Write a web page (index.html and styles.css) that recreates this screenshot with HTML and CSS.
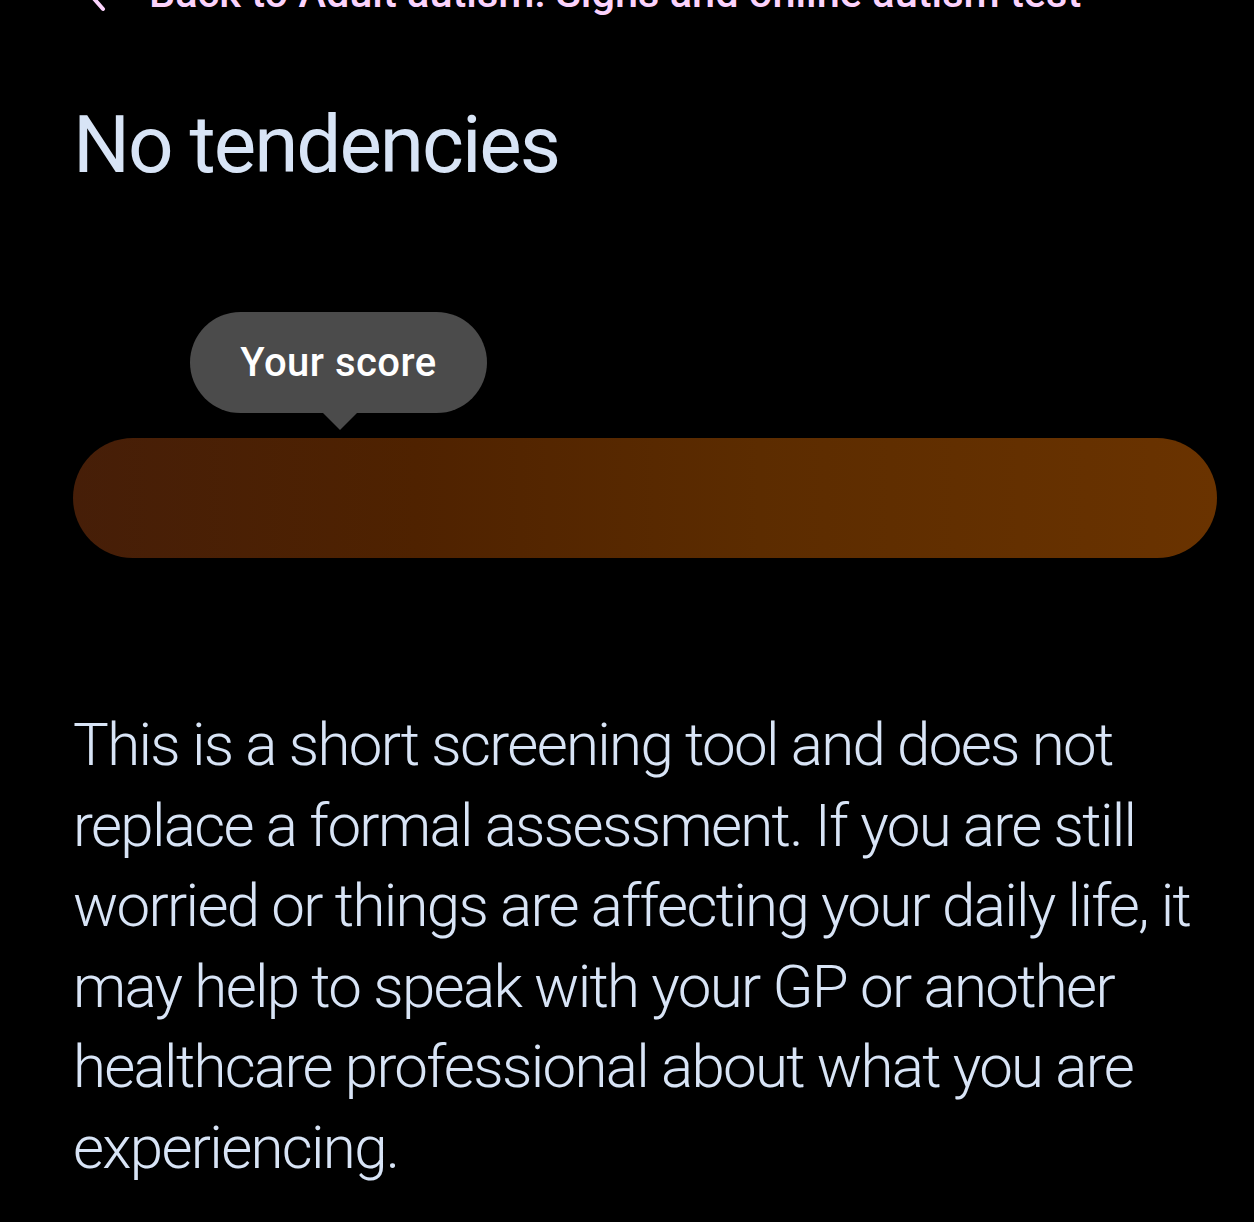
FILE: index.html
```html
<!DOCTYPE html>
<html lang="en">
<head>
<meta charset="utf-8">
<title>No tendencies</title>
<link rel="stylesheet" href="styles.css">
</head>
<body>
<main class="page">
  <a class="back-link" href="#">
    <svg class="back-icon" viewBox="0 0 24 40" width="24" height="40" aria-hidden="true"><path d="M20 4 L6 20 L20 36" fill="none" stroke="currentColor" stroke-width="4" stroke-linecap="round" stroke-linejoin="round"/></svg>
    <span>Back to Adult autism: Signs and online autism test</span>
  </a>
  <h1 class="result-title">No tendencies</h1>
  <section class="score">
    <div class="score-tip">Your score</div>
    <div class="score-bar"></div>
  </section>
  <p class="note">This is a short screening tool and does not replace a formal assessment. If you are still worried or things are affecting your daily life, it may help to speak with your GP or another healthcare professional about what you are experiencing.</p>
</main>
</body>
</html>
```
FILE: styles.css
```css
html, body {
  margin: 0;
  padding: 0;
  background: #000;
}
body {
  font-family: Roboto, "Noto Sans", sans-serif;
  color: #d8e4f6;
  overflow: hidden;
}
.page {
  padding: 0 37px 0 73px;
}
.back-link {
  display: flex;
  align-items: center;
  gap: 42px;
  margin-top: -27px;
  height: 40px;
  color: #fbd3fc;
  text-decoration: none;
  font-size: 41.5px;
  font-weight: 500;
  line-height: 40px;
}
.back-icon {
  margin-left: 10px;
  flex: none;
}
.result-title {
  margin: 84px 0 0;
  font-size: 80px;
  font-weight: 400;
  line-height: 96px;
  letter-spacing: -0.025em;
  color: #d8e4f6;
}
.score {
  margin-top: 119px;
}
.score-tip {
  position: relative;
  margin-left: 117px;
  width: 297px;
  height: 101px;
  border-radius: 51px;
  background: #4b4b4b;
  color: #fff;
  font-size: 40px;
  font-weight: 500;
  letter-spacing: 0.5px;
  line-height: 101px;
  text-align: center;
  box-sizing: border-box;
}
.score-tip::after {
  content: "";
  position: absolute;
  left: 132px;
  top: 100px;
  border-left: 18px solid transparent;
  border-right: 18px solid transparent;
  border-top: 18px solid #4b4b4b;
}
.score-bar {
  margin-top: 25px;
  height: 120px;
  border-radius: 60px;
  background: linear-gradient(90deg, #461e08 0%, #4f2200 30%, #5c2c00 60%, #6a3300 100%);
}
.note {
  margin: 147px 0 0;
  font-size: 60px;
  font-weight: 300;
  line-height: 80.5px;
  letter-spacing: -0.028em;
  color: #d8e4f6;
}
```
